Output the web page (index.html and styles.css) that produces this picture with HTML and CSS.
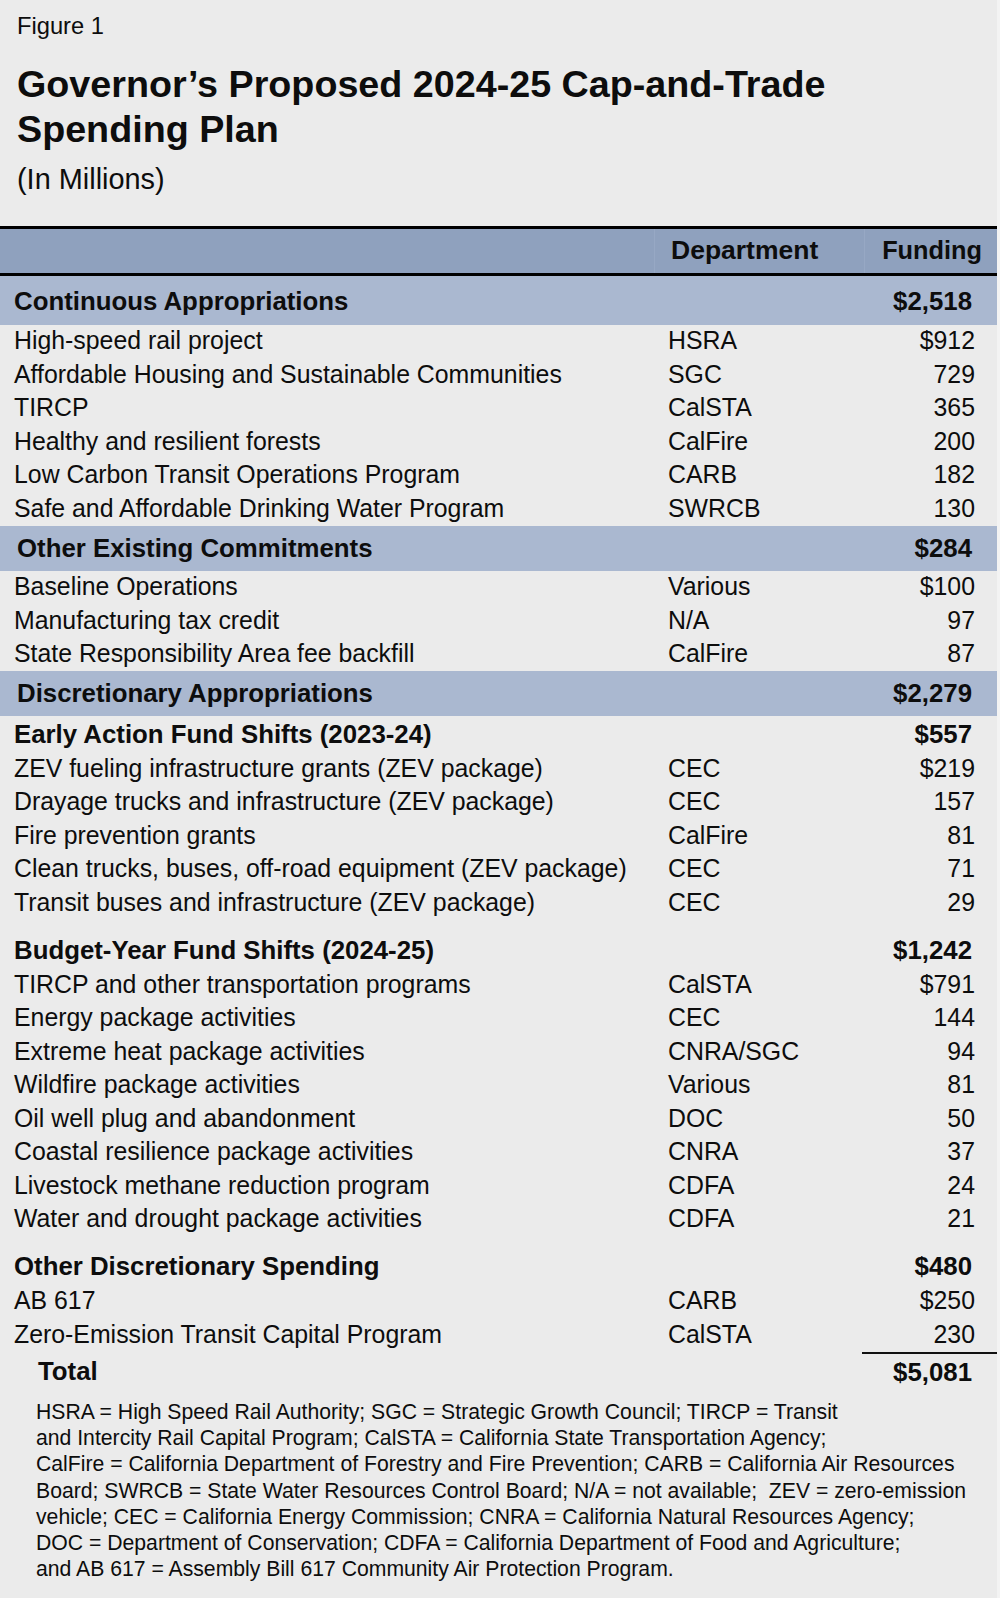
FILE: index.html
```html
<!DOCTYPE html>
<html lang="en">
<head>
<meta charset="utf-8">
<title>Figure 1 - Governor’s Proposed 2024-25 Cap-and-Trade Spending Plan</title>
<link rel="stylesheet" href="styles.css">
</head>
<body>
<div class="page">
  <header class="fig-head">
    <div class="fig-label">Figure 1</div>
    <h1 class="title">Governor’s Proposed 2024-25 Cap-and-Trade<br>Spending Plan</h1>
    <div class="units">(In Millions)</div>
  </header>

  <div class="table">
    <div class="row head"><span class="cell c-label"></span><span class="cell c-dept">Department</span><span class="cell c-fund">Funding</span></div>

    <div class="row band first"><span class="cell c-label">Continuous Appropriations</span><span class="cell c-dept"></span><span class="cell c-fund">$2,518</span></div>
    <div class="row"><span class="cell c-label">High-speed rail project</span><span class="cell c-dept">HSRA</span><span class="cell c-fund">$912</span></div>
    <div class="row"><span class="cell c-label">Affordable Housing and Sustainable Communities</span><span class="cell c-dept">SGC</span><span class="cell c-fund">729</span></div>
    <div class="row"><span class="cell c-label">TIRCP</span><span class="cell c-dept">CalSTA</span><span class="cell c-fund">365</span></div>
    <div class="row"><span class="cell c-label">Healthy and resilient forests</span><span class="cell c-dept">CalFire</span><span class="cell c-fund">200</span></div>
    <div class="row"><span class="cell c-label">Low Carbon Transit Operations Program</span><span class="cell c-dept">CARB</span><span class="cell c-fund">182</span></div>
    <div class="row"><span class="cell c-label">Safe and Affordable Drinking Water Program</span><span class="cell c-dept">SWRCB</span><span class="cell c-fund">130</span></div>

    <div class="row band"><span class="cell c-label">Other Existing Commitments</span><span class="cell c-dept"></span><span class="cell c-fund">$284</span></div>
    <div class="row"><span class="cell c-label">Baseline Operations</span><span class="cell c-dept">Various</span><span class="cell c-fund">$100</span></div>
    <div class="row"><span class="cell c-label">Manufacturing tax credit</span><span class="cell c-dept">N/A</span><span class="cell c-fund">97</span></div>
    <div class="row"><span class="cell c-label">State Responsibility Area fee backfill</span><span class="cell c-dept">CalFire</span><span class="cell c-fund">87</span></div>

    <div class="row band"><span class="cell c-label">Discretionary Appropriations</span><span class="cell c-dept"></span><span class="cell c-fund">$2,279</span></div>

    <div class="row sub"><span class="cell c-label">Early Action Fund Shifts (2023-24)</span><span class="cell c-dept"></span><span class="cell c-fund">$557</span></div>
    <div class="row"><span class="cell c-label">ZEV fueling infrastructure grants (ZEV package)</span><span class="cell c-dept">CEC</span><span class="cell c-fund">$219</span></div>
    <div class="row"><span class="cell c-label">Drayage trucks and infrastructure (ZEV package)</span><span class="cell c-dept">CEC</span><span class="cell c-fund">157</span></div>
    <div class="row"><span class="cell c-label">Fire prevention grants</span><span class="cell c-dept">CalFire</span><span class="cell c-fund">81</span></div>
    <div class="row"><span class="cell c-label">Clean trucks, buses, off-road equipment (ZEV package)</span><span class="cell c-dept">CEC</span><span class="cell c-fund">71</span></div>
    <div class="row"><span class="cell c-label">Transit buses and infrastructure (ZEV package)</span><span class="cell c-dept">CEC</span><span class="cell c-fund">29</span></div>

    <div class="row sub gap"><span class="cell c-label">Budget-Year Fund Shifts (2024-25)</span><span class="cell c-dept"></span><span class="cell c-fund">$1,242</span></div>
    <div class="row"><span class="cell c-label">TIRCP and other transportation programs</span><span class="cell c-dept">CalSTA</span><span class="cell c-fund">$791</span></div>
    <div class="row"><span class="cell c-label">Energy package activities</span><span class="cell c-dept">CEC</span><span class="cell c-fund">144</span></div>
    <div class="row"><span class="cell c-label">Extreme heat package activities</span><span class="cell c-dept">CNRA/SGC</span><span class="cell c-fund">94</span></div>
    <div class="row"><span class="cell c-label">Wildfire package activities</span><span class="cell c-dept">Various</span><span class="cell c-fund">81</span></div>
    <div class="row"><span class="cell c-label">Oil well plug and abandonment</span><span class="cell c-dept">DOC</span><span class="cell c-fund">50</span></div>
    <div class="row"><span class="cell c-label">Coastal resilience package activities</span><span class="cell c-dept">CNRA</span><span class="cell c-fund">37</span></div>
    <div class="row"><span class="cell c-label">Livestock methane reduction program</span><span class="cell c-dept">CDFA</span><span class="cell c-fund">24</span></div>
    <div class="row"><span class="cell c-label">Water and drought package activities</span><span class="cell c-dept">CDFA</span><span class="cell c-fund">21</span></div>

    <div class="row sub gap"><span class="cell c-label">Other Discretionary Spending</span><span class="cell c-dept"></span><span class="cell c-fund">$480</span></div>
    <div class="row"><span class="cell c-label">AB 617</span><span class="cell c-dept">CARB</span><span class="cell c-fund">$250</span></div>
    <div class="row"><span class="cell c-label">Zero-Emission Transit Capital Program</span><span class="cell c-dept">CalSTA</span><span class="cell c-fund">230</span></div>

    <div class="row total"><span class="cell c-label">Total</span><span class="cell c-dept"></span><span class="cell c-fund">$5,081</span></div>
  </div>

  <p class="notes">HSRA = High Speed Rail Authority; SGC = Strategic Growth Council; TIRCP = Transit<br>and Intercity Rail Capital Program; CalSTA = California State Transportation Agency;<br>CalFire = California Department of Forestry and Fire Prevention; CARB = California Air Resources<br>Board; SWRCB = State Water Resources Control Board; N/A = not available;&nbsp; ZEV = zero-emission<br>vehicle; CEC = California Energy Commission; CNRA = California Natural Resources Agency;<br>DOC = Department of Conservation; CDFA = California Department of Food and Agriculture;<br>and AB 617 = Assembly Bill 617 Community Air Protection Program.</p>
</div>
</body>
</html>
```

FILE: styles.css
```css
html {
  background: #f3f3f3;
}

body {
  margin: 0;
  font-family: "Liberation Sans", Arial, Helvetica, sans-serif;
  color: #0d0d0d;
}

.page {
  width: 997px;
  min-height: 1598px;
  background: #ebebeb;
  box-sizing: border-box;
  padding-top: 12px;
}

.fig-head {
  padding-left: 17px;
  padding-bottom: 30px;
}

.fig-label {
  font-size: 23.7px;
  line-height: 28px;
  height: 28px;
}

.title {
  margin: 22px 0 0;
  font-size: 37.7px;
  line-height: 45px;
  font-weight: bold;
}

.units {
  margin-top: 9.5px;
  font-size: 28.9px;
  line-height: 34px;
}

.table {
  display: flex;
  flex-direction: column;
}

.row {
  display: grid;
  grid-template-columns: 654px 210px 133px;
  height: 33.5px;
  font-size: 24.85px;
}

.cell {
  display: flex;
  align-items: center;
  white-space: nowrap;
}

.c-label {
  padding-left: 14px;
}

.c-dept {
  padding-left: 14px;
}

.c-fund {
  justify-content: flex-end;
  padding-right: 22px;
}

.head {
  height: 44px;
  background: #8fa1be;
  border-top: 3px solid #000;
  border-bottom: 3px solid #000;
  font-weight: bold;
}

.head .c-dept {
  padding-left: 16px;
  font-size: 26.5px;
  border-left: 1px solid #97a8c4;
}

.head .c-fund {
  justify-content: center;
  padding-right: 0;
  padding-left: 2px;
  font-size: 25.3px;
  border-left: 1px solid #97a8c4;
}

.band {
  height: 45px;
  background: #aab8d0;
  font-weight: bold;
  font-size: 25.8px;
}

.band.first {
  height: 49px;
}

.band.first .cell {
  padding-top: 2px;
}

.band .c-label {
  padding-left: 17px;
}

.band.first .c-label {
  padding-left: 14px;
}

.band .c-fund,
.sub .c-fund,
.total .c-fund {
  padding-right: 25px;
}

.sub {
  height: 36px;
  font-weight: bold;
  font-size: 25.8px;
}

.sub.gap {
  margin-top: 12.5px;
}

.total {
  height: 40px;
  font-weight: bold;
  font-size: 25.8px;
}

.total .c-label {
  padding-left: 38px;
}

.total .c-fund {
  margin-left: -2px;
  border-top: 2px solid #111;
}

.notes {
  margin: 7.5px 0 0;
  padding-left: 36px;
  font-size: 21.2px;
  line-height: 26.2px;
}
```
